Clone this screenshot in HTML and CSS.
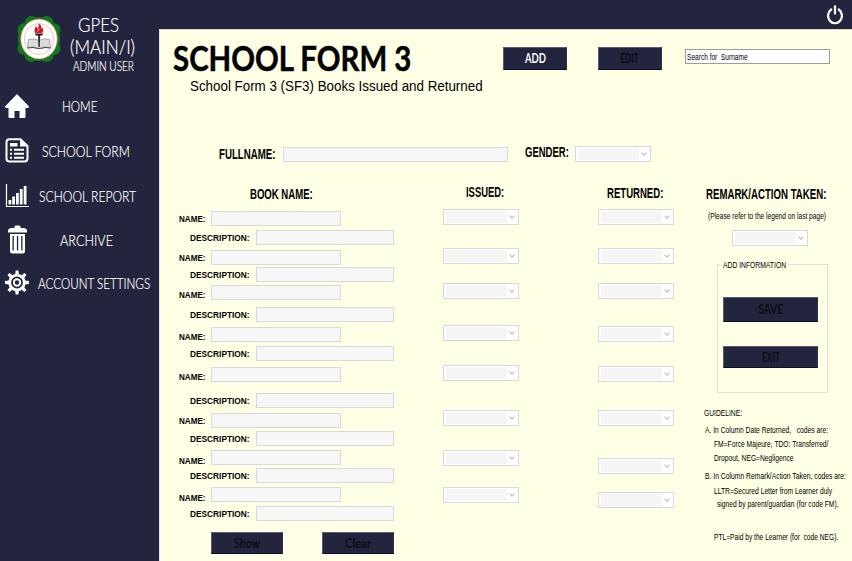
FILE: index.html
```html
<!DOCTYPE html>
<html lang="en">
<head>
<meta charset="utf-8">
<title>School Form 3</title>
<link rel="stylesheet" href="styles.css">
</head>
<body>
<div class="app">
  <aside class="sidebar">
    <div class="brand">
      <svg class="logo" width="46" height="48" viewBox="0 0 46 48">
        <g fill="#13771b">
          <ellipse cx="23" cy="24" rx="21" ry="22"/>
          <circle cx="15.500" cy="8" r="7"/><circle cx="30.500" cy="8" r="7"/>
          <circle cx="8.500" cy="15" r="7"/><circle cx="37.500" cy="15" r="7"/>
          <circle cx="8.500" cy="33" r="7"/><circle cx="37.500" cy="33" r="7"/>
          <circle cx="15.500" cy="40" r="7"/><circle cx="30.500" cy="40" r="7"/>
        </g>
        <ellipse cx="23" cy="24" rx="18.300" ry="20" fill="#fff" stroke="#b08a55" stroke-width=".7"/>
        <ellipse cx="23" cy="24" rx="14.700" ry="15.500" fill="none" stroke="#f0a9a9" stroke-width=".7"/>
        <path d="M12.500 24.500q6-1.800 10.500 1q4.500-2.800 10.500-1l1 8q-6.500-1.500-11.500.8q-5-2.300-11.500-.8z" fill="#dcdcdc" stroke="#777" stroke-width=".6"/>
        <path d="M11.500 33q6-1.300 10 .6h3q4-1.900 10-.6" fill="none" stroke="#444" stroke-width="1"/>
        <path d="M22 20h2.200l-.4 12h-1.400z" fill="#333"/>
        <path d="M18.500 18.500h9l-1.500 2h-6z" fill="#222"/>
        <path d="M19.500 18c-2.500-3 .5-5 0-7c1.500.8 1.800 2 1.800 3c1-1.500 2.200-3 1-5.500c3 1.200 3.700 3.500 3.200 5.500l1.200-1c1 2 .5 4-.7 5z" fill="#d8141c"/>
        <path d="M21 16.500q1.800-1 2.300-3" fill="none" stroke="#fff" stroke-width=".7"/>
      </svg>
      <div class="brand-text">
        <div class="brand-line brand-top"><span class="sx">GPES</span></div>
        <div class="brand-line brand-branch"><span class="sx">(MAIN/I)</span></div>
        <div class="brand-user"><span class="sx">ADMIN USER</span></div>
      </div>
    </div>
    <nav class="menu">
      <a class="item home">
        <svg width="24" height="24" viewBox="0 0 24 24"><path d="M12 0L24 12.500Q24 14 22.500 14H20.500V23q0 1-1 1H14.500V17H9.500V24H4.500q-1 0-1-1V14H1.500Q0 14 0 12.500z" fill="#fff"/></svg>
        <span class="sx">HOME</span></a>
      <a class="item form">
        <svg width="24" height="25" viewBox="0 0 24 25"><path d="M4.500 1.300H15.500L22.500 8V20.500q0 3-3 3H4.500q-3 0-3-3V4.300q0-3 3-3z" fill="none" stroke="#fff" stroke-width="2"/><path d="M15 1L23 8.500H15z" fill="#fff"/><path d="M5 5h7.500v3.500H5z" fill="#fff"/><path d="M5 11.800h2M5 15.800h2M5 19.700h2M9 11.800h10M9 15.800h10M9 19.700h10" stroke="#fff" stroke-width="1.900"/></svg>
        <span class="sx">SCHOOL FORM</span></a>
      <a class="item report">
        <svg width="24" height="24" viewBox="0 0 24 24"><path d="M1.500 0V22.500H24" fill="none" stroke="#fff" stroke-width="1.200"/><path d="M3.500 16h2.800v4.500H3.500zM7.200 12.500H10v8H7.200zM11 9h2.800v11.500H11zM14.800 5h2.800v15.500h-2.800zM18.700 2h2.800v18.500h-2.800z" fill="#fff"/></svg>
        <span class="sx">SCHOOL REPORT</span></a>
      <a class="item archive">
        <svg width="24" height="29" viewBox="0 0 24 29"><path d="M3 7.500V5.500Q3.500 3 6.500 3H9.500V2q0-1.500 1.500-1.500h3Q15.500 .5 15.500 2V3h3q3 0 3.500 2.500V7.500z" fill="#fff"/><path fill-rule="evenodd" d="M5 9H20V26q0 2.500-2.500 2.500H7.500Q5 28.500 5 26zM7.500 11v14.500h1.300V11zM11.900 11v14.500h1.300V11zM16.200 11v14.500h1.300V11z" fill="#fff"/></svg>
        <span class="sx">ARCHIVE</span></a>
      <a class="item settings">
        <svg width="24" height="25" viewBox="-12 -12.500 24 25"><g fill="#fff"><path id="t" d="M-1.900 -8L-1.400 -12H1.400L1.900 -8z"/><use href="#t" transform="rotate(45)"/><use href="#t" transform="rotate(90)"/><use href="#t" transform="rotate(135)"/><use href="#t" transform="rotate(180)"/><use href="#t" transform="rotate(225)"/><use href="#t" transform="rotate(270)"/><use href="#t" transform="rotate(315)"/></g><circle r="7.300" fill="none" stroke="#fff" stroke-width="2.800"/><circle r="3.200" fill="none" stroke="#fff" stroke-width="2"/></svg>
        <span class="sx">ACCOUNT SETTINGS</span></a>
    </nav>
  </aside>
  <div class="main">
    <div class="topbar">
      <svg width="16" height="20" viewBox="0 0 16 20"><path d="M4.200 4.500A6.900 7.500 0 1 0 11.800 4.500" fill="none" stroke="#fff" stroke-width="2.200" stroke-linecap="round"/><path d="M8 1.500V8.500" stroke="#fff" stroke-width="2.300" stroke-linecap="round"/></svg>
    </div>
    <main class="page">
      <header class="head">
        <div class="titles">
          <h1><span class="sx">SCHOOL FORM 3</span></h1>
          <p><span class="sx">School Form 3 (SF3) Books Issued and Returned</span></p>
        </div>
        <button class="btn add"><span>ADD</span></button>
        <button class="btn edit off"><span>EDIT</span></button>
        <div class="search"><span class="sx">Search for&nbsp; Surname</span></div>
      </header>
      <section class="person">
        <label class="big fullname-label"><span class="sx">FULLNAME:</span></label>
        <div class="field fullname"></div>
        <label class="big gender-label"><span class="sx">GENDER:</span></label>
        <div class="select gender"><i></i></div>
      </section>
      <section class="columns">
        <div class="books">
          <h2 class="big"><span class="sx">BOOK NAME:</span></h2>
          <div class="row name"><label><span class="sx">NAME:</span></label><div class="field"></div></div>
          <div class="row desc"><label><span class="sx">DESCRIPTION:</span></label><div class="field"></div></div>
          <div class="row name"><label><span class="sx">NAME:</span></label><div class="field"></div></div>
          <div class="row desc"><label><span class="sx">DESCRIPTION:</span></label><div class="field"></div></div>
          <div class="row name low"><label><span class="sx">NAME:</span></label><div class="field"></div></div>
          <div class="row desc"><label><span class="sx">DESCRIPTION:</span></label><div class="field"></div></div>
          <div class="row name low"><label><span class="sx">NAME:</span></label><div class="field"></div></div>
          <div class="row desc"><label><span class="sx">DESCRIPTION:</span></label><div class="field"></div></div>
          <div class="row name low"><label><span class="sx">NAME:</span></label><div class="field"></div></div>
          <div class="row desc"><label><span class="sx">DESCRIPTION:</span></label><div class="field"></div></div>
          <div class="row name"><label><span class="sx">NAME:</span></label><div class="field"></div></div>
          <div class="row desc"><label><span class="sx">DESCRIPTION:</span></label><div class="field"></div></div>
          <div class="row name lower"><label><span class="sx">NAME:</span></label><div class="field"></div></div>
          <div class="row desc"><label><span class="sx">DESCRIPTION:</span></label><div class="field"></div></div>
          <div class="row name lower"><label><span class="sx">NAME:</span></label><div class="field"></div></div>
          <div class="row desc"><label><span class="sx">DESCRIPTION:</span></label><div class="field"></div></div>
          <div class="actions">
            <button class="btn show off"><span>Show</span></button>
            <button class="btn clear off"><span>Clear</span></button>
          </div>
        </div>
        <div class="issued">
          <h2 class="big"><span class="sx">ISSUED:</span></h2>
          <div class="select"><i></i></div><div class="select"><i></i></div><div class="select"><i></i></div><div class="select"><i></i></div>
          <div class="select"><i></i></div><div class="select"><i></i></div><div class="select"><i></i></div><div class="select"><i></i></div>
        </div>
        <div class="returned">
          <h2 class="big"><span class="sx">RETURNED:</span></h2>
          <div class="select"><i></i></div><div class="select"><i></i></div><div class="select"><i></i></div><div class="select"><i></i></div>
          <div class="select"><i></i></div><div class="select"><i></i></div><div class="select"><i></i></div><div class="select"><i></i></div>
        </div>
        <div class="remark">
          <h2 class="big"><span class="sx">REMARK/ACTION TAKEN:</span></h2>
          <p class="note"><span class="sx">(Please refer to the legend on last page)</span></p>
          <div class="select"><i></i></div>
          <div class="group">
            <div class="legend"><span class="sx">ADD INFORMATION</span></div>
            <button class="btn save off"><span>SAVE</span></button>
            <button class="btn exit off"><span>EXIT</span></button>
          </div>
          <div class="guide">
            <p><span class="sx">GUIDELINE:</span></p>
            <p><span class="sx">A. In Column Date Returned,&nbsp;&nbsp; codes are:</span></p>
            <p><span class="sx">FM=Force Majeure, TDO: Transferred/</span></p>
            <p><span class="sx">Dropout, NEG=Negligence</span></p>
            <p><span class="sx">B. In Column Remark/Action Taken, codes are:</span></p>
            <p><span class="sx">LLTR=Secured Letter from Learner duly</span></p>
            <p><span class="sx">signed by parent/guardian (for code FM),</span></p>
            <p><span class="sx">PTL=Paid by the Learner (for&nbsp; code NEG).</span></p>
          </div>
        </div>
      </section>
    </main>
  </div>
</div>
</body>
</html>
```
FILE: styles.css
```css
* { box-sizing: border-box; margin: 0; padding: 0; }
body { width: 852px; height: 561px; overflow: hidden; font-family: "Liberation Sans", Arial, sans-serif; color: #000; }
.app { display: flex; width: 852px; height: 561px; background: #23243d; }

/* Condensed lettering: --s is the horizontal scale */
.sx { display: inline-block; white-space: nowrap; transform: scaleX(var(--s, 1)); transform-origin: 0 50%; }

.sidebar { width: 159px; flex: none; color: #fff; font-family: Lato, sans-serif; font-weight: 300; -webkit-text-stroke: .2px #fff; }
.brand { display: flex; height: 83px; padding: 15px 0 0 16px; }
.logo { flex: none; }
.brand-text { width: 90px; margin-top: -1px; }
.brand-line { height: 22px; line-height: 22px; font-size: 19.5px; }
.brand-top { padding-left: 16px; --s: .866; }
.brand-branch { padding-left: 8px; --s: .88; }
.brand-user { padding-left: 11px; height: 16px; line-height: 17px; font-size: 13px; --s: .774; }

.item { display: flex; align-items: center; height: 45px; padding-left: 5px; font-size: 15px; }
.item svg { flex: none; }
.item .sx { line-height: 20px; width: 60px; }
.home .sx { margin-left: 33px; --s: .78; }
.form .sx { margin-left: 13px; --s: .818; }
.report .sx { margin-left: 10px; --s: .808; }
.archive { height: 43px; }
.archive .sx { margin-left: 31px; --s: .844; }
.settings { height: 43px; }
.settings .sx { margin-left: 9px; --s: .777; }

.main { width: 693px; display: flex; flex-direction: column; }
.topbar { height: 29px; flex: none; display: flex; justify-content: flex-end; padding: 5px 9px 0 0; }
.page { flex: 1; background: #feffe5; border-left: 1px solid #e4e5d8; border-top: 1px solid #d9dacd; padding-left: 13px; }

.head { display: flex; align-items: flex-start; height: 116px; }
.titles { width: 330px; }
h1 { height: 40px; margin-top: 7px; font: 700 35px/40px Lato, sans-serif; -webkit-text-stroke: .5px #000; --s: .84; }
.titles p { margin: 0 0 0 17px; font-size: 15.5px; line-height: 18px; --s: .862; }

.btn { display: flex; align-items: center; justify-content: center; border: 1px solid #595b70; border-bottom-color: #0c0d2e; border-right-color: #30314b; background: #23243d; color: #fff; font: 700 13px/16px Lato, sans-serif; flex: none; }
.btn span { display: block; margin-top: -1px; transform: scaleX(var(--s, 1)); }
.off { color: #0b0b14; }
.add { width: 64px; height: 23px; margin-top: 17px; --s: .73; }
.edit { width: 64px; height: 23px; margin: 17px 0 0 31px; --s: .63; }
.search { width: 145px; height: 15px; margin: 19px 0 0 23px; padding-left: 1px; border: 1px solid #9b9c9c; background: #fff; font-size: 9px; line-height: 14px; white-space: nowrap; --s: .73; }

.big { font-size: 14.5px; font-weight: 700; line-height: 18px; height: 18px; --s: .665; }
.field { height: 15px; background: #f6f6f6; border: 1px solid #d9d9dc; flex: none; }
.select { position: relative; width: 76px; height: 16px; flex: none; border: 1px solid #d8d8dc; background: #fff; padding: 1px; }
.select::before { content: ""; display: block; width: 61px; height: 12px; background: #f5f5f5; margin-left: 1px; }
.select i { position: absolute; right: 4px; top: 4px; width: 4px; height: 4px; border: solid #b9b9bd; border-width: 0 1px 1px 0; transform: rotate(45deg); }

.person { display: flex; height: 17px; }
.fullname-label { width: 110px; padding-left: 46px; margin-top: -1px; flex: none; --s: .668; }
.fullname { width: 225px; margin-top: 1px; }
.gender-label { width: 67px; padding-left: 17px; margin-top: -3px; flex: none; --s: .655; }

.columns { display: flex; padding-left: 5px; }
.books { width: 265px; flex: none; }
.books h2 { margin: 22px 0 8px 72px; --s: .66; }
.row { display: flex; height: 15px; font-size: 9.5px; font-weight: 700; line-height: 15px; }
.name label { width: 33px; padding-left: 1px; --s: .85; }
.name .field { width: 130px; }
.desc label { width: 78px; padding-left: 12px; --s: .875; }
.desc .field { width: 138px; }
.row label { flex: none; }
.low label { margin-top: 2px; }
.lower label { margin-top: 3px; }
.row:nth-of-type(2) { margin-top: 4px; }
.row:nth-of-type(3) { margin-top: 5px; }
.row:nth-of-type(4) { margin-top: 2px; }
.row:nth-of-type(5) { margin-top: 3px; }
.row:nth-of-type(6) { margin-top: 7px; }
.row:nth-of-type(7) { margin-top: 5px; }
.row:nth-of-type(8) { margin-top: 4px; }
.row:nth-of-type(9) { margin-top: 6px; }
.row:nth-of-type(10) { margin-top: 11px; }
.row:nth-of-type(11) { margin-top: 5px; }
.row:nth-of-type(12) { margin-top: 3px; }
.row:nth-of-type(13) { margin-top: 4px; }
.row:nth-of-type(14) { margin-top: 3px; }
.row:nth-of-type(15) { margin-top: 4px; }
.row:nth-of-type(16) { margin-top: 4px; }
.actions { display: flex; gap: 39px; margin: 11px 0 0 33px; }
.show, .clear { width: 72px; height: 22px; color: #0d0d16; --s: .81; }
.clear { --s: .86; }

.issued { width: 155px; flex: none; }
.issued h2 { margin: 20px 0 8px 23px; --s: .65; }
.returned { width: 106px; flex: none; }
.returned h2 { margin: 21px 0 7px 9px; --s: .66; }
.columns .select:nth-of-type(2) { margin-top: 23px; }
.columns .select:nth-of-type(3) { margin-top: 19px; }
.issued .select:nth-of-type(4) { margin-top: 26px; }
.issued .select:nth-of-type(5) { margin-top: 24px; }
.issued .select:nth-of-type(6) { margin-top: 29px; }
.issued .select:nth-of-type(7) { margin-top: 24px; }
.issued .select:nth-of-type(8) { margin-top: 21px; }
.returned .select:nth-of-type(4) { margin-top: 27px; }
.returned .select:nth-of-type(5) { margin-top: 24px; }
.returned .select:nth-of-type(6) { margin-top: 28px; }
.returned .select:nth-of-type(7) { margin-top: 32px; }
.returned .select:nth-of-type(8) { margin-top: 18px; }

.remark { width: 146px; flex: none; font-size: 9px; }
.remark h2 { margin: 22px 0 6px 2px; }
.note { height: 14px; line-height: 14px; margin-left: 4px; --s: .735; }
.remark > .select { margin: 7px 0 0 28px; }
.group { position: relative; width: 111px; height: 129px; margin: 18px 0 0 13px; padding: 32px 0 0 5px; border: 1px solid #dfe0d8; }
.legend { position: absolute; left: 3px; top: -7px; width: 67px; height: 14px; padding-left: 2px; line-height: 14px; background: #feffe5; white-space: nowrap; --s: .752; }
.save { width: 95px; height: 25px; --s: .772; }
.exit { width: 95px; height: 22px; margin-top: 24px; --s: .66; }
.guide { margin-top: 14px; --s: .745; }
.guide p { height: 12px; line-height: 12px; padding-left: 10px; margin-top: 2px; }
.guide p:nth-child(1) { padding-left: 0; margin: 0; }
.guide p:nth-child(2) { padding-left: 1px; margin-top: 5px; }
.guide p:nth-child(4) { margin-top: 2px; }
.guide p:nth-child(5) { padding-left: 1px; margin-top: 6px; --s: .754; }
.guide p:nth-child(6) { margin-top: 3px; }
.guide p:nth-child(7) { padding-left: 13px; margin-top: 1px; }
.guide p:nth-child(8) { margin-top: 21px; --s: .738; }
```
